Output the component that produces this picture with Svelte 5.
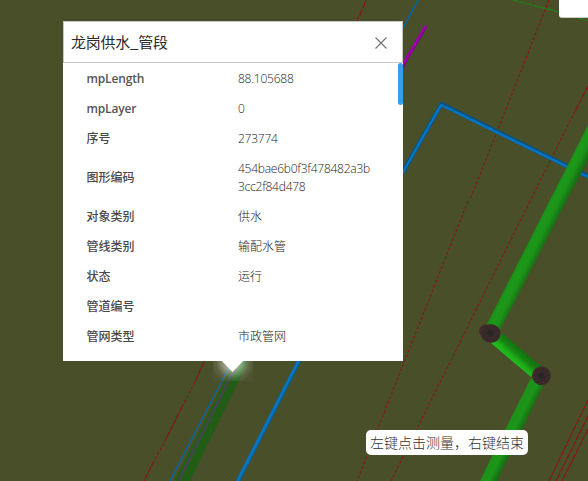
<script>
  const rows = [
    ['mpLength', '88.105688'],
    ['mpLayer', '0'],
    ['序号', '273774'],
    ['图形编码', '454bae6b0f3f478482a3b3cc2f84d478'],
    ['对象类别', '供水'],
    ['管线类别', '输配水管'],
    ['状态', '运行'],
    ['管道编号', ''],
    ['管网类型', '市政管网']
  ];
  const isLatin = (text) => /^[\x20-\x7e]+$/.test(text);
  const redLines = [
    [362, 10, 357, 21, 1], [363, 8, 366, 0, 1],
    [549, 0, 470, 200, 0], [468, 201, 357, 481, 0],
    [588, 86, 575, 111, 1], [575, 111, 530, 201, 0], [530, 201, 391, 481, 0],
    [204, 362, 195, 382, 1], [195, 382, 182, 407, 0], [182, 407, 166, 439, 1],
    [166, 439, 154, 461, 0], [154, 461, 144, 481, 1],
    [588, 400, 549, 481, 1], [588, 416, 556, 481, 1], [588, 429, 562, 481, 1]
  ];
</script>

<main class="scene">
  <svg class="map" width="588" height="481" viewBox="0 0 588 481" aria-hidden="true">
    <defs>
      <linearGradient id="long" gradientUnits="userSpaceOnUse" x1="550" y1="200" x2="564" y2="207">
        <stop offset="0" stop-color="#1c8e18" /><stop offset=".2" stop-color="#1d991a" />
        <stop offset=".52" stop-color="#1c9519" /><stop offset="1" stop-color="#176b12" />
      </linearGradient>
      <linearGradient id="short" gradientUnits="userSpaceOnUse" x1="523" y1="351" x2="513" y2="362">
        <stop offset="0" stop-color="#147010" /><stop offset=".4" stop-color="#168512" />
        <stop offset=".7" stop-color="#1dac1a" /><stop offset="1" stop-color="#1fbd1c" />
      </linearGradient>
      <linearGradient id="low" gradientUnits="userSpaceOnUse" x1="505" y1="430" x2="519" y2="437">
        <stop offset="0" stop-color="#1c9118" /><stop offset=".5" stop-color="#1c9719" />
        <stop offset="1" stop-color="#166a12" />
      </linearGradient>
      <radialGradient id="glow" gradientUnits="userSpaceOnUse" cx="233" cy="362" r="22">
        <stop offset="0" stop-color="#fff" stop-opacity=".8" />
        <stop offset=".4" stop-color="#fff" stop-opacity=".46" />
        <stop offset=".75" stop-color="#fff" stop-opacity=".12" />
        <stop offset="1" stop-color="#fff" stop-opacity=".03" />
      </radialGradient>
      <radialGradient id="cap">
        <stop offset="0" stop-color="#242426" /><stop offset=".32" stop-color="#29272a" />
        <stop offset=".46" stop-color="#3d2a2a" /><stop offset=".75" stop-color="#342626" />
        <stop offset="1" stop-color="#423030" />
      </radialGradient>
    </defs>

    {#each redLines as [x1, y1, x2, y2, solid]}
      <line {x1} {y1} {x2} {y2} class="red" class:solid={solid === 1} />
    {/each}
    <path d="M513 0L559 12M578 18L588 20.5" stroke="#1c8718" stroke-width="1.2" stroke-dasharray="6 1" />
    <path d="M418 0L403 28M229 367L170 481" stroke="#08649f" stroke-width="1.6" fill="none" />
    <path d="M426 26L402 67" stroke="#81008d" stroke-width="3.4" />
    <path d="M425.5 25.5L401.5 66.5" stroke="#a500b5" stroke-width="1.7" />
    <g fill="none" stroke-linejoin="round">
      <path d="M400 177L441.5 104L588 176.5" stroke="#05548a" stroke-width="4.4" />
      <path d="M400 177.5L441 105L588 177" stroke="#0674bd" stroke-width="2.5" />
      <path d="M299.5 360L238 481" stroke="#05609b" stroke-width="4.2" />
      <path d="M299 360L237.3 481" stroke="#0876c0" stroke-width="2.6" />
    </g>
    <path d="M588 125L550 200L486 326L500 330L567 200L588 160Z" fill="url(#long)" />
    <path d="M502 333L541 366L531 377L491 343Z" fill="url(#short)" />
    <path d="M531 378L505 430L480 481H497L522 430L544 384Z" fill="url(#low)" />
    <path d="M486 324.5Q479 325 479 332Q481 338 487 340L489 325Z" fill="#402b2b" />
    <ellipse cx="490.7" cy="333.5" rx="10" ry="9.5" fill="url(#cap)" />
    <circle cx="541.5" cy="375.8" r="9.5" fill="url(#cap)" />
    <g fill="none" stroke="#573b3b" stroke-width="1" stroke-dasharray="1 3">
      <ellipse cx="490.7" cy="333.5" rx="7" ry="6.5" />
      <circle cx="541.5" cy="375.8" r="7" />
    </g>

    <path d="M235 360H249L190 481H175Z" fill="#215d14" />
    <path d="M230 367L172 481" stroke="#57552c" stroke-width="1" />
    <path d="M231 371L175 481" stroke="#246016" stroke-width="1.5" />
    <path d="M234 370L178.5 481" stroke="#42484a" stroke-width="2.8" />
    <path d="M210 420L220 418M210.5 428V437" stroke="#345f22" stroke-width=".7" />
    <path d="M213 361H253V381H213Z" fill="url(#glow)" />
    <path d="M221 360H244L232.5 372Z" fill="#fff" />
  </svg>

  <section class="popup">
    <header>
      <h1>龙岗供水_管段</h1>
      <svg class="close" width="12" height="12" viewBox="0 0 12 12" aria-label="关闭">
        <path d="M.5 .5L11.5 11.5M11.5 .5L.5 11.5" />
      </svg>
    </header>
    <div class="body">
      <dl>
        {#each rows as [label, value]}
          <div class="row">
            <dt class:latin={isLatin(label)}>{label}</dt>
            <dd class:latin={isLatin(value)}>{value}</dd>
          </div>
        {/each}
      </dl>
      <div class="thumb"></div>
    </div>
  </section>
  <div class="corner"></div>
  <div class="tip">左键点击测量，右键结束</div>
</main>

<style>
  :global(body) { margin: 0; overflow: hidden; }
  .scene {
    position: relative;
    width: 588px;
    height: 481px;
    overflow: hidden;
    background: #494f29;
    font-family: "Open Sans", "Noto Sans CJK SC", sans-serif;
  }
  .map { position: absolute; inset: 0; }
  .red { stroke: #87190f; stroke-width: 1.1; stroke-dasharray: 3 2; }
  .red.solid { stroke: #8f1010; stroke-dasharray: 6 1; }
  .popup {
    position: absolute;
    left: 63px;
    top: 21px;
    width: 340px;
    height: 340px;
    background: #fff;
    display: flex;
    flex-direction: column;
  }
  header {
    box-sizing: border-box;
    flex: none;
    height: 42px;
    border: 1px solid #c6c6c6;
    display: flex;
    align-items: center;
    justify-content: space-between;
    padding: 0 15px 0 7px;
  }
  h1 {
    margin: 0;
    font: 400 15px/20px "Noto Sans CJK SC", sans-serif;
    letter-spacing: -0.25px;
    color: #2b2b2b;
    white-space: nowrap;
  }
  .close { margin-top: 2px; }
  .close path { stroke: #707070; stroke-width: 1.1; }
  .body {
    flex: 1;
    min-height: 0;
    display: flex;
    justify-content: space-between;
  }
  dl { margin: 0; padding: 1px 0 0 23.5px; }
  .row {
    display: flex;
    align-items: center;
    padding: 6px 0;
    min-height: 18px;
    font-size: 12px;
    line-height: 18px;
  }
  dt { width: 151.5px; font-weight: 500; color: #484848; }
  dt.latin { font-weight: 600; letter-spacing: -0.15px; color: #555; }
  dd { margin: 0; width: 134px; word-break: break-all; font-weight: 300; color: #222; }
  dd.latin { letter-spacing: -0.24px; }
  .thumb { width: 5px; height: 42px; border-radius: 3px; background: #3b9cec; }
  .corner {
    position: absolute;
    left: 559px;
    top: 0;
    width: 29px;
    height: 18px;
    box-sizing: border-box;
    background: #fff;
    border-bottom: 1px solid #ccc;
    border-bottom-left-radius: 3px;
  }
  .tip {
    position: absolute;
    left: 366px;
    top: 430px;
    width: 162px;
    height: 25px;
    box-sizing: border-box;
    padding-left: 4px;
    border-radius: 5px;
    background: #fff;
    font: 300 14px/25px "Noto Sans CJK SC", sans-serif;
    color: #333;
    white-space: nowrap;
  }
</style>
